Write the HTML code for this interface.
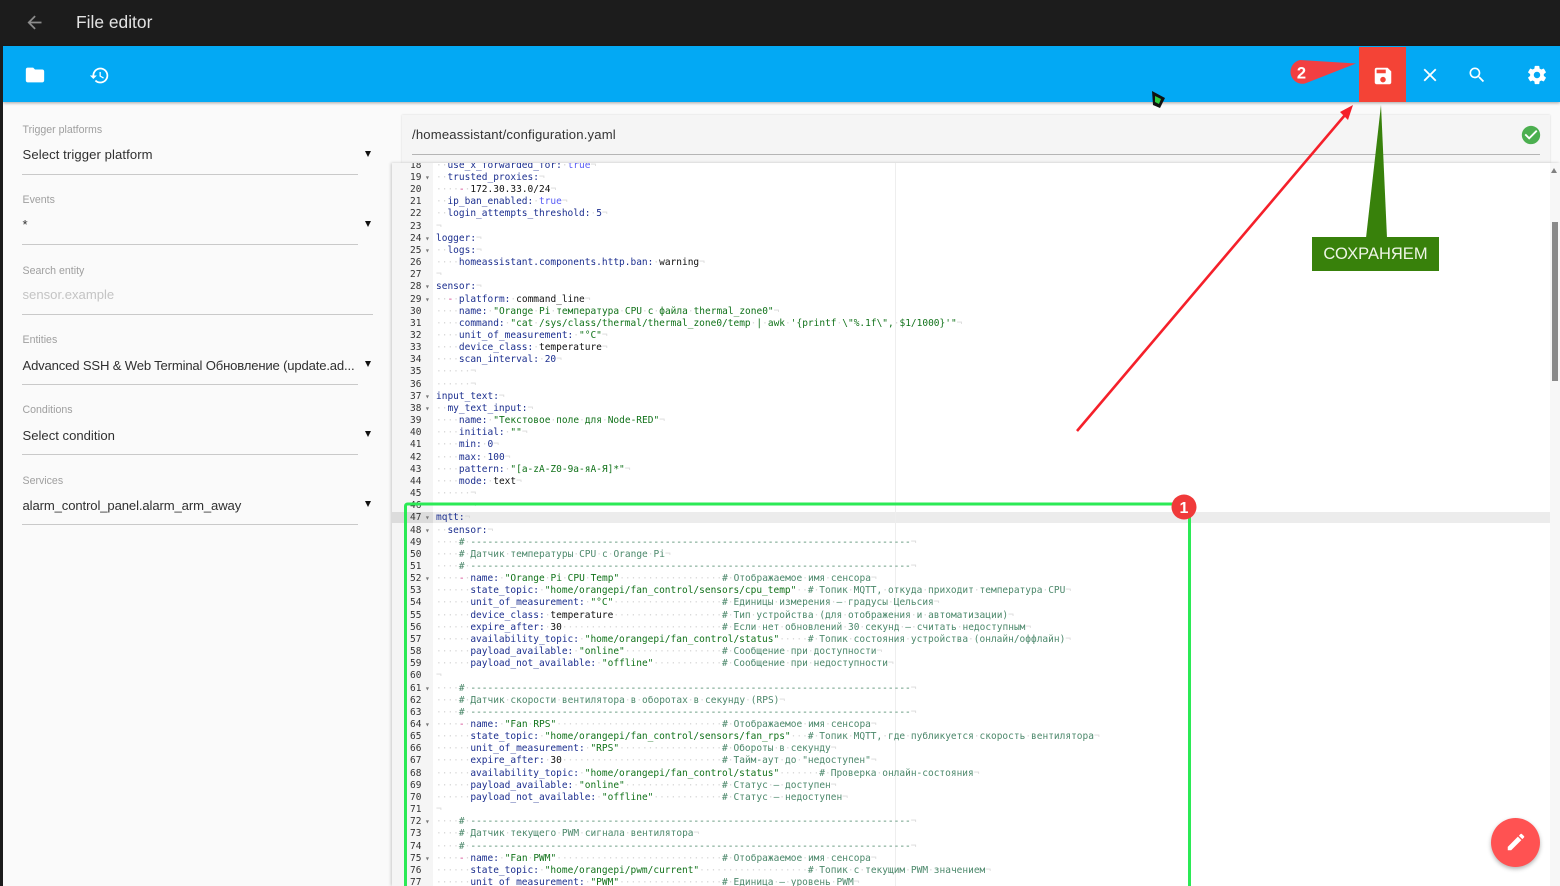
<!DOCTYPE html>
<html><head><meta charset="utf-8"><title>File editor</title>
<style>
html,body{margin:0;padding:0;width:1560px;height:886px;overflow:hidden;background:#fafafa;font-family:"Liberation Sans","Noto Sans CJK SC",sans-serif}
body{filter:blur(.25px)}
.a{position:absolute}
svg{display:block}
#top{left:0;top:0;width:1560px;height:46px;background:#1c1c1c}
#title{left:76px;top:12px;font-size:17.4px;line-height:20px;color:#e3e3e3}
#bar{left:3px;top:46px;width:1557px;height:56px;background:#03a9f4;box-shadow:0 1px 3px rgba(0,0,0,.35)}
#strip{left:0;top:46px;width:3px;height:840px;background:#1c1c1c}
.lab{left:22.5px;font-size:10.6px;line-height:13px;color:#9f9f9f}
.val{left:22.5px;font-size:13.1px;line-height:16px;color:#303030;white-space:nowrap}
.und{left:22px;width:336px;height:1px;background:#c9c9c9}
.tri{left:365px;width:0;height:0;border-left:3.5px solid transparent;border-right:3.5px solid transparent;border-top:6px solid #111}
#path{left:402px;top:115px;width:1148px;height:48px;background:#f5f5f5;box-shadow:0 0 2px rgba(0,0,0,.15)}
#ed{left:392px;top:163px;width:1168px;height:723px;background:#fff;overflow:hidden;box-shadow:-1px 0 3px rgba(0,0,0,.2)}
#gut{left:0;top:0;width:41px;height:723px;background:#f5f5f5}
#act1{left:0;top:348.7px;width:41px;height:11.6px;background:#dcdcdc}
#act2{left:41px;top:348.7px;width:1117px;height:11.6px;background:#ececec}
#mar{left:503px;top:0;width:1px;height:723px;background:#eeeeee}
pre{margin:0;font-family:"DejaVu Sans Mono","Liberation Mono",monospace;font-size:9.5px;line-height:12.16px}
#nums{left:0;top:-3.2px;width:29.5px;text-align:right;color:#333}
#folds{left:33px;top:-3.2px;color:#777;font-size:8px}
#code{left:44px;top:-3.2px;color:#111}
i{font-style:normal;color:#d9d9d9}
k{color:#1c2f8f}
s{text-decoration:none;color:#11721a}
c{color:#4c886b}
b{font-weight:normal;color:#585cf6}
u{text-decoration:none;color:#d23f8c}
#sb{left:1158px;top:0;width:10px;height:723px;background:#f7f7f7}
#thumb{left:1160px;top:59px;width:6px;height:159px;background:#8a8a8a}
#fab{left:1491px;top:818px;width:49px;height:49px;border-radius:50%;background:#ff5252;box-shadow:0 2px 4px rgba(0,0,0,.3)}
#lbl{left:1312px;top:237px;width:127px;height:34px;background:#38810b;color:#eef5e6;font-size:16.5px;line-height:34px;text-align:center}
</style></head><body>
<div class="a" id="top"></div>
<svg class="a" style="left:23.5px;top:12px" width="21" height="21" viewBox="0 0 24 24"><path fill="#8c8c8c" d="M20 11H7.83l5.59-5.59L12 4l-8 8 8 8 1.41-1.41L7.83 13H20v-2z"/></svg>
<div class="a" id="title">File editor</div>
<div class="a" id="bar"></div>
<div class="a" id="strip"></div>
<svg class="a" style="left:24px;top:64px" width="22" height="22" viewBox="0 0 24 24"><path fill="#fff" d="M10 4H4c-1.1 0-1.99.9-1.99 2L2 18c0 1.1.9 2 2 2h16c1.1 0 2-.9 2-2V8c0-1.1-.9-2-2-2h-8l-2-2z"/></svg>
<svg class="a" style="left:89px;top:64.500px" width="21" height="21" viewBox="0 0 24 24"><path fill="#fff" d="M13 3c-4.97 0-9 4.03-9 9H1l3.89 3.89.07.14L9 12H6c0-3.87 3.13-7 7-7s7 3.13 7 7-3.13 7-7 7c-1.93 0-3.68-.79-4.94-2.06l-1.42 1.42C8.27 19.99 10.51 21 13 21c4.97 0 9-4.03 9-9s-4.03-9-9-9zm-1 5v5l4.28 2.54.72-1.21-3.5-2.08V8H12z"/></svg>
<div class="a" style="left:1359px;top:47px;width:47px;height:55px;background:#f44336"></div>
<svg class="a" style="left:1371.500px;top:64.500px" width="22" height="22" viewBox="0 0 24 24"><path fill="#fff" d="M17 3H5c-1.11 0-2 .9-2 2v14c0 1.1.89 2 2 2h14c1.1 0 2-.9 2-2V7l-4-4zm-5 16c-1.66 0-3-1.34-3-3s1.34-3 3-3 3 1.34 3 3-1.34 3-3 3zm3-10H5V5h10v4z"/></svg>
<svg class="a" style="left:1418.500px;top:64px" width="22" height="22" viewBox="0 0 24 24"><path fill="#fff" d="M19 6.41L17.59 5 12 10.59 6.41 5 5 6.41 10.59 12 5 17.59 6.41 19 12 13.41 17.59 19 19 17.59 13.41 12z"/></svg>
<svg class="a" style="left:1467px;top:65px" width="20" height="20" viewBox="0 0 24 24"><path fill="#fff" d="M15.5 14h-.79l-.28-.27C15.41 12.59 16 11.11 16 9.5 16 5.91 13.09 3 9.5 3S3 5.91 3 9.5 5.91 16 9.5 16c1.61 0 3.09-.59 4.23-1.57l.27.28v.79l5 4.99L20.49 19l-4.99-5zm-6 0C7.01 14 5 11.99 5 9.5S7.01 5 9.5 5 14 7.01 14 9.5 11.99 14 9.5 14z"/></svg>
<svg class="a" style="left:1526px;top:64px" width="22" height="22" viewBox="0 0 24 24"><path fill="#fff" d="M19.43 12.98c.04-.32.07-.64.07-.98s-.03-.66-.07-.98l2.11-1.65c.19-.15.24-.42.12-.64l-2-3.46c-.12-.22-.39-.3-.61-.22l-2.49 1c-.52-.4-1.08-.73-1.69-.98l-.38-2.65C14.46 2.18 14.25 2 14 2h-4c-.25 0-.46.18-.49.42l-.38 2.65c-.61.25-1.17.59-1.69.98l-2.49-1c-.23-.09-.49 0-.61.22l-2 3.46c-.13.22-.07.49.12.64l2.11 1.65c-.04.32-.07.65-.07.98s.03.66.07.98l-2.11 1.65c-.19.15-.24.42-.12.64l2 3.46c.12.22.39.3.61.22l2.49-1c.52.4 1.08.73 1.69.98l.38 2.65c.03.24.24.42.49.42h4c.25 0 .46-.18.49-.42l.38-2.65c.61-.25 1.17-.59 1.69-.98l2.49 1c.23.09.49 0 .61-.22l2-3.46c.12-.22.07-.49-.12-.64l-2.11-1.65zM12 15.5c-1.93 0-3.5-1.57-3.5-3.5s1.57-3.5 3.5-3.5 3.5 1.57 3.5 3.5-1.57 3.5-3.5 3.5z"/></svg>

<div class="a lab" style="top:124px">Trigger platforms</div>
<div class="a val" style="top:147px;letter-spacing:.09px">Select trigger platform</div>
<div class="a tri" style="top:151px"></div>
<div class="a und" style="top:174px"></div>
<div class="a lab" style="top:194px">Events</div>
<div class="a val" style="top:217px">*</div>
<div class="a tri" style="top:221px"></div>
<div class="a und" style="top:244px"></div>
<div class="a lab" style="top:265px">Search entity</div>
<div class="a val" style="top:287px;color:#c4c4c4">sensor.example</div>
<div class="a" style="left:22px;top:314px;width:351px;height:1px;background:#c9c9c9"></div>
<div class="a lab" style="top:334px">Entities</div>
<div class="a val" style="top:358px;letter-spacing:-.17px">Advanced SSH &amp; Web Terminal Обновление (update.ad...</div>
<div class="a tri" style="top:361px"></div>
<div class="a und" style="top:384px"></div>
<div class="a lab" style="top:404px">Conditions</div>
<div class="a val" style="top:428px">Select condition</div>
<div class="a tri" style="top:431px"></div>
<div class="a und" style="top:454px"></div>
<div class="a lab" style="top:475px">Services</div>
<div class="a val" style="top:498px;letter-spacing:-.12px">alarm_control_panel.alarm_arm_away</div>
<div class="a tri" style="top:501px"></div>
<div class="a und" style="top:524px"></div>

<div class="a" id="path">
<div class="a" style="left:10px;top:12px;font-size:13.1px;line-height:16px;color:#333;letter-spacing:.18px">/homeassistant/configuration.yaml</div>
<div class="a" style="left:10px;top:39px;width:1128px;height:1px;background:#b5b5b5"></div>
<svg class="a" style="left:1118px;top:9px" width="22" height="22" viewBox="0 0 24 24"><circle cx="12" cy="12" r="8" fill="#fff"/><path fill="#4caf50" d="M12 2C6.48 2 2 6.48 2 12s4.48 10 10 10 10-4.48 10-10S17.52 2 12 2zm-2 15l-5-5 1.41-1.41L10 14.17l7.59-7.59L19 8l-9 9z"/></svg>
</div>

<div class="a" id="ed">
<div class="a" id="gut"></div>
<div class="a" id="act1"></div>
<div class="a" id="act2"></div>
<div class="a" id="mar"></div>
<pre class="a" id="nums">18
19
20
21
22
23
24
25
26
27
28
29
30
31
32
33
34
35
36
37
38
39
40
41
42
43
44
45
46
47
48
49
50
51
52
53
54
55
56
57
58
59
60
61
62
63
64
65
66
67
68
69
70
71
72
73
74
75
76
77</pre>
<pre class="a" id="folds">

▾




▾
▾


▾
▾







▾
▾








▾
▾



▾








▾


▾







▾


▾</pre>
<pre class="a" id="code"><i>··</i><k>use_x_forwarded_for:</k><i>·</i><b>true</b><i>¬</i>
<i>··</i><k>trusted_proxies:</k><i>¬</i>
<i>····</i><u>-</u><i>·</i>172.30.33.0/24<i>¬</i>
<i>··</i><k>ip_ban_enabled:</k><i>·</i><b>true</b><i>¬</i>
<i>··</i><k>login_attempts_threshold:</k><i>·</i><k>5</k><i>¬</i>
<i>¬</i>
<k>logger:</k><i>¬</i>
<i>··</i><k>logs:</k><i>¬</i>
<i>····</i><k>homeassistant.components.http.ban:</k><i>·</i>warning<i>¬</i>
<i>¬</i>
<k>sensor:</k><i>¬</i>
<i>··</i><u>-</u><i>·</i><k>platform:</k><i>·</i>command_line<i>¬</i>
<i>····</i><k>name:</k><i>·</i><s>"Orange<i>·</i>Pi<i>·</i>температура<i>·</i>CPU<i>·</i>с<i>·</i>файла<i>·</i>thermal_zone0"</s><i>¬</i>
<i>····</i><k>command:</k><i>·</i><s>"cat<i>·</i>/sys/class/thermal/thermal_zone0/temp<i>·</i>|<i>·</i>awk<i>·</i>'{printf<i>·</i>\"%.1f\",<i>·</i>$1/1000}'"</s><i>¬</i>
<i>····</i><k>unit_of_measurement:</k><i>·</i><s>"°C"</s><i>¬</i>
<i>····</i><k>device_class:</k><i>·</i>temperature<i>¬</i>
<i>····</i><k>scan_interval:</k><i>·</i><k>20</k><i>¬</i>
<i>······¬</i>
<i>······¬</i>
<k>input_text:</k><i>¬</i>
<i>··</i><k>my_text_input:</k><i>¬</i>
<i>····</i><k>name:</k><i>·</i><s>"Текстовое<i>·</i>поле<i>·</i>для<i>·</i>Node-RED"</s><i>¬</i>
<i>····</i><k>initial:</k><i>·</i><s>""</s><i>¬</i>
<i>····</i><k>min:</k><i>·</i><k>0</k><i>¬</i>
<i>····</i><k>max:</k><i>·</i><k>100</k><i>¬</i>
<i>····</i><k>pattern:</k><i>·</i><s>"[a-zA-Z0-9a-яА-Я]*"</s><i>¬</i>
<i>····</i><k>mode:</k><i>·</i>text<i>¬</i>
<i>······¬</i>
<i>······¬</i>
<k>mqtt:</k><i>¬</i>
<i>··</i><k>sensor:</k><i>¬</i>
<i>····</i><c>#<i>·</i>-----------------------------------------------------------------------------</c><i>¬</i>
<i>····</i><c>#<i>·</i>Датчик<i>·</i>температуры<i>·</i>CPU<i>·</i>с<i>·</i>Orange<i>·</i>Pi</c><i>¬</i>
<i>····</i><c>#<i>·</i>-----------------------------------------------------------------------------</c><i>¬</i>
<i>····</i><u>-</u><i>·</i><k>name:</k><i>·</i><s>"Orange<i>·</i>Pi<i>·</i>CPU<i>·</i>Temp"</s><i>··················</i><c>#<i>·</i>Отображаемое<i>·</i>имя<i>·</i>сенсора</c><i>¬</i>
<i>······</i><k>state_topic:</k><i>·</i><s>"home/orangepi/fan_control/sensors/cpu_temp"</s><i>··</i><c>#<i>·</i>Топик<i>·</i>MQTT,<i>·</i>откуда<i>·</i>приходит<i>·</i>температура<i>·</i>CPU</c><i>¬</i>
<i>······</i><k>unit_of_measurement:</k><i>·</i><s>"°C"</s><i>···················</i><c>#<i>·</i>Единицы<i>·</i>измерения<i>·</i>—<i>·</i>градусы<i>·</i>Цельсия</c><i>¬</i>
<i>······</i><k>device_class:</k><i>·</i>temperature<i>···················</i><c>#<i>·</i>Тип<i>·</i>устройства<i>·</i>(для<i>·</i>отображения<i>·</i>и<i>·</i>автоматизации)</c><i>¬</i>
<i>······</i><k>expire_after:</k><i>·</i>30<i>····························</i><c>#<i>·</i>Если<i>·</i>нет<i>·</i>обновлений<i>·</i>30<i>·</i>секунд<i>·</i>—<i>·</i>считать<i>·</i>недоступным</c><i>¬</i>
<i>······</i><k>availability_topic:</k><i>·</i><s>"home/orangepi/fan_control/status"</s><i>·····</i><c>#<i>·</i>Топик<i>·</i>состояния<i>·</i>устройства<i>·</i>(онлайн/оффлайн)</c><i>¬</i>
<i>······</i><k>payload_available:</k><i>·</i><s>"online"</s><i>·················</i><c>#<i>·</i>Сообщение<i>·</i>при<i>·</i>доступности</c><i>¬</i>
<i>······</i><k>payload_not_available:</k><i>·</i><s>"offline"</s><i>············</i><c>#<i>·</i>Сообщение<i>·</i>при<i>·</i>недоступности</c><i>¬</i>
<i>¬</i>
<i>····</i><c>#<i>·</i>-----------------------------------------------------------------------------</c><i>¬</i>
<i>····</i><c>#<i>·</i>Датчик<i>·</i>скорости<i>·</i>вентилятора<i>·</i>в<i>·</i>оборотах<i>·</i>в<i>·</i>секунду<i>·</i>(RPS)</c><i>¬</i>
<i>····</i><c>#<i>·</i>-----------------------------------------------------------------------------</c><i>¬</i>
<i>····</i><u>-</u><i>·</i><k>name:</k><i>·</i><s>"Fan<i>·</i>RPS"</s><i>·····························</i><c>#<i>·</i>Отображаемое<i>·</i>имя<i>·</i>сенсора</c><i>¬</i>
<i>······</i><k>state_topic:</k><i>·</i><s>"home/orangepi/fan_control/sensors/fan_rps"</s><i>···</i><c>#<i>·</i>Топик<i>·</i>MQTT,<i>·</i>где<i>·</i>публикуется<i>·</i>скорость<i>·</i>вентилятора</c><i>¬</i>
<i>······</i><k>unit_of_measurement:</k><i>·</i><s>"RPS"</s><i>··················</i><c>#<i>·</i>Обороты<i>·</i>в<i>·</i>секунду</c><i>¬</i>
<i>······</i><k>expire_after:</k><i>·</i>30<i>····························</i><c>#<i>·</i>Тайм-аут<i>·</i>до<i>·</i>"недоступен"</c><i>¬</i>
<i>······</i><k>availability_topic:</k><i>·</i><s>"home/orangepi/fan_control/status"</s><i>·······</i><c>#<i>·</i>Проверка<i>·</i>онлайн-состояния</c><i>¬</i>
<i>······</i><k>payload_available:</k><i>·</i><s>"online"</s><i>·················</i><c>#<i>·</i>Статус<i>·</i>—<i>·</i>доступен</c><i>¬</i>
<i>······</i><k>payload_not_available:</k><i>·</i><s>"offline"</s><i>············</i><c>#<i>·</i>Статус<i>·</i>—<i>·</i>недоступен</c><i>¬</i>
<i>¬</i>
<i>····</i><c>#<i>·</i>-----------------------------------------------------------------------------</c><i>¬</i>
<i>····</i><c>#<i>·</i>Датчик<i>·</i>текущего<i>·</i>PWM<i>·</i>сигнала<i>·</i>вентилятора</c><i>¬</i>
<i>····</i><c>#<i>·</i>-----------------------------------------------------------------------------</c><i>¬</i>
<i>····</i><u>-</u><i>·</i><k>name:</k><i>·</i><s>"Fan<i>·</i>PWM"</s><i>·····························</i><c>#<i>·</i>Отображаемое<i>·</i>имя<i>·</i>сенсора</c><i>¬</i>
<i>······</i><k>state_topic:</k><i>·</i><s>"home/orangepi/pwm/current"</s><i>···················</i><c>#<i>·</i>Топик<i>·</i>с<i>·</i>текущим<i>·</i>PWM<i>·</i>значением</c><i>¬</i>
<i>······</i><k>unit_of_measurement:</k><i>·</i><s>"PWM"</s><i>··················</i><c>#<i>·</i>Единица<i>·</i>—<i>·</i>уровень<i>·</i>PWM</c><i>¬</i></pre>
<div class="a" id="sb"></div>
<div class="a" id="thumb"></div>
<div class="a" style="left:1159px;top:5px;width:0;height:0;border-left:3.5px solid transparent;border-right:3.5px solid transparent;border-bottom:5px solid #808080"></div>
</div>

<div class="a" id="fab"></div>
<svg class="a" style="left:1504.500px;top:831px" width="22" height="22" viewBox="0 0 24 24"><path fill="#fff" d="M3 17.25V21h3.75L17.81 9.94l-3.75-3.75L3 17.25zM20.71 7.04c.39-.39.39-1.02 0-1.41l-2.34-2.34c-.39-.39-1.02-.39-1.41 0l-1.83 1.83 3.75 3.75 1.83-1.83z"/></svg>

<svg class="a" style="left:0;top:0" width="1560" height="886" viewBox="0 0 1560 886">
<rect x="405.5" y="504" width="784" height="390" rx="2" fill="none" stroke="#2bea55" stroke-width="3"/>
<circle cx="1184" cy="507" r="12.5" fill="#f03a3a"/>
<text x="1184" y="513" font-family="Liberation Sans" font-weight="bold" font-size="16" fill="#fff" text-anchor="middle">1</text>
<path d="M1077 431L1345 115" stroke="#f5202a" stroke-width="2.6" fill="none"/>
<path d="M1353 105L1340 112L1348 120Z" fill="#f5202a"/>
<path d="M1356 63.500L1300 60A12 12 0 1 0 1305 83.500Z" fill="#f23f42"/>
<text x="1301.500" y="78.500" font-family="Liberation Sans" font-weight="bold" font-size="16.500" fill="#fff" text-anchor="middle">2</text>
<path d="M1381 105L1387 238H1366Z" fill="#38810b"/>
<path d="M1152 91L1165 98L1160 108L1153 105Z" fill="#111"/>
<path d="M1155 96L1161 99L1159 104L1155 102Z" fill="#2ecc40"/>
</svg>
<div class="a" id="lbl">СОХРАНЯЕМ</div>
</body></html>
